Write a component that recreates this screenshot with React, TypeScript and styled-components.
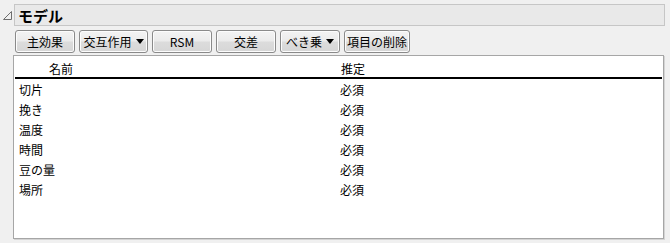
import React from "react";
import styled, { createGlobalStyle } from "styled-components";

const GlobalStyle = createGlobalStyle`
  html, body {
    margin: 0;
    padding: 0;
    background: #f0f0f0;
  }
  body {
    font-family: "Noto Sans CJK JP", "Liberation Sans", sans-serif;
    font-size: 12px;
    color: #000;
  }
`;

const Page = styled.div`
  width: 670px;
  height: 243px;
  box-sizing: border-box;
  padding: 4px 5px 0 3px;
  display: flex;
  flex-direction: column;
`;

const OutlineHeader = styled.div`
  display: flex;
  align-items: stretch;
  height: 22px;
`;

const Disclosure = styled.div`
  width: 11px;
  display: flex;
  align-items: center;
  padding-top: 1px;
`;

const TitleBox = styled.div`
  flex: 1;
  display: flex;
  align-items: center;
  padding-left: 3px;
  background: #e9e9e9;
  border: 1px solid #c6c6c6;
  font-weight: bold;
  font-size: 15px;
  line-height: 1;
`;

const Body = styled.div`
  display: flex;
  flex-direction: column;
  padding-left: 10px;
  padding-top: 4px;
`;

const Toolbar = styled.div`
  display: flex;
  gap: 4px;
  padding-left: 2px;
  height: 23px;
`;

const Button = styled.button<{ $w: number }>`
  width: ${({ $w }) => $w}px;
  height: 23px;
  box-sizing: border-box;
  padding: 0;
  display: flex;
  align-items: center;
  justify-content: center;
  gap: 4px;
  border: 1px solid #8a8a8a;
  border-radius: 3px;
  background: linear-gradient(#f3f3f3 0%, #ebebeb 48%, #dcdcdc 52%, #d6d6d6 100%);
  box-shadow: inset 0 0 0 1px #fcfcfc;
  font-family: "Noto Sans CJK JP", "Liberation Sans", sans-serif;
  font-size: 12px;
  color: #000;
  line-height: 1;
`;

const Caret = styled.span`
  width: 0;
  height: 0;
  border-left: 4px solid transparent;
  border-right: 4px solid transparent;
  border-top: 5px solid #000;
`;

const ListBox = styled.div`
  margin-top: 2px;
  width: 651px;
  height: 184px;
  box-sizing: border-box;
  background: #fff;
  border: 1px solid #a6a6a6;
  box-shadow: 1px 1px 0 #d4d4d4;
  display: flex;
  flex-direction: column;
`;

const HeaderRow = styled.div`
  display: grid;
  grid-template-columns: 326px 1fr;
  height: 21px;
  align-items: center;
  margin-right: 1px;
  margin-left: 1px;
  border-bottom: 2px solid #000;
`;

const HeadCell = styled.div<{ $pad: number }>`
  padding-left: ${({ $pad }) => $pad}px;
  padding-top: 3px;
`;

const Row = styled.div`
  display: grid;
  grid-template-columns: 326px 1fr;
  height: 20px;
  align-items: center;
`;

const Cell = styled.div<{ $pad: number }>`
  padding-left: ${({ $pad }) => $pad}px;
`;

const rows = ["切片", "挽き", "温度", "時間", "豆の量", "場所"];

const buttons: { label: string; w: number; menu?: boolean }[] = [
  { label: "主効果", w: 60 },
  { label: "交互作用", w: 69, menu: true },
  { label: "RSM", w: 60 },
  { label: "交差", w: 60 },
  { label: "べき乗", w: 60, menu: true },
  { label: "項目の削除", w: 66 },
];

export default function App() {
  return (
    <>
      <GlobalStyle />
      <Page>
        <OutlineHeader>
          <Disclosure>
            <svg width="9" height="9" viewBox="0 0 9 9">
              <path d="M0.5 8.5 L8.5 0.5 L8.5 8.5 Z" fill="none" stroke="#6e6e6e" strokeWidth="1" />
            </svg>
          </Disclosure>
          <TitleBox>モデル</TitleBox>
        </OutlineHeader>
        <Body>
          <Toolbar>
            {buttons.map((b) => (
              <Button key={b.label} $w={b.w}>
                {b.label}
                {b.menu && <Caret />}
              </Button>
            ))}
          </Toolbar>
          <ListBox>
            <HeaderRow>
              <HeadCell $pad={34}>名前</HeadCell>
              <HeadCell $pad={0}>推定</HeadCell>
            </HeaderRow>
            {rows.map((r) => (
              <Row key={r}>
                <Cell $pad={5}>{r}</Cell>
                <Cell $pad={0}>必須</Cell>
              </Row>
            ))}
          </ListBox>
        </Body>
      </Page>
    </>
  );
}
